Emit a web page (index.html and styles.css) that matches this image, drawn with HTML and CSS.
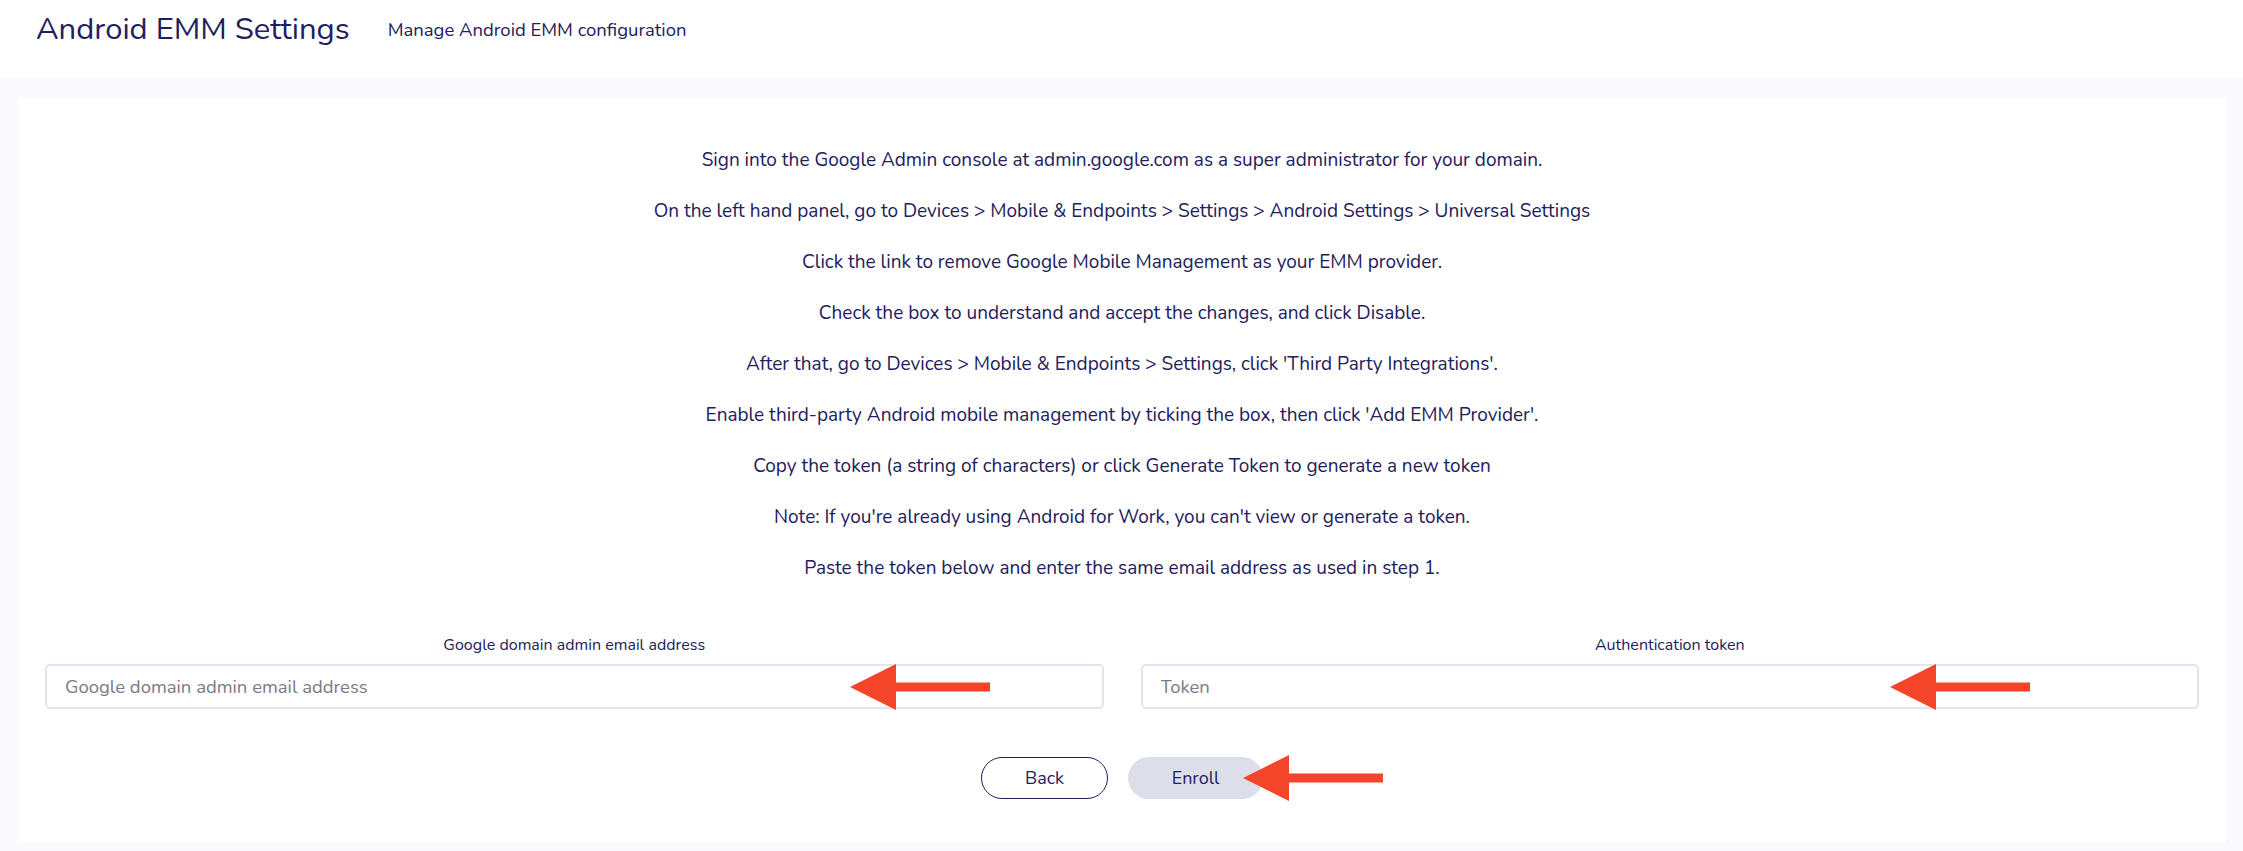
FILE: index.html
```html
<!DOCTYPE html>
<html lang="en">
<head>
  <meta charset="UTF-8">
  <meta name="viewport" content="width=device-width, initial-scale=1.0">
  <title>Android EMM Settings</title>
  <link rel="stylesheet" href="styles.css">
</head>
<body>
  <header class="page-head">
    <h1>Android EMM Settings</h1>
    <span class="page-sub">Manage Android EMM configuration</span>
  </header>

  <main class="page-body">
    <section class="card">
      <div class="steps">
        <p>Sign into the Google Admin console at admin.google.com as a super administrator for your domain.</p>
        <p>On the left hand panel, go to Devices &gt; Mobile &amp; Endpoints &gt; Settings &gt; Android Settings &gt; Universal Settings</p>
        <p>Click the link to remove Google Mobile Management as your EMM provider.</p>
        <p>Check the box to understand and accept the changes, and click Disable.</p>
        <p>After that, go to Devices &gt; Mobile &amp; Endpoints &gt; Settings, click 'Third Party Integrations'.</p>
        <p>Enable third-party Android mobile management by ticking the box, then click 'Add EMM Provider'.</p>
        <p>Copy the token (a string of characters) or click Generate Token to generate a new token</p>
        <p>Note: If you're already using Android for Work, you can't view or generate a token.</p>
        <p>Paste the token below and enter the same email address as used in step 1.</p>
      </div>

      <form class="enroll-form" onsubmit="return false">
        <div class="fields">
          <div class="field">
            <label for="admin-email">Google domain admin email address</label>
            <div class="input-wrap">
              <input type="email" id="admin-email" placeholder="Google domain admin email address">
              <svg class="pointer pointer-email" viewBox="0 0 140 46" width="140" height="46"><polygon points="0,23 46,0 46,18.5 140,18.5 140,27.5 46,27.5 46,46"/></svg>
            </div>
          </div>
          <div class="field">
            <label for="auth-token">Authentication token</label>
            <div class="input-wrap">
              <input type="text" id="auth-token" placeholder="Token">
              <svg class="pointer pointer-token" viewBox="0 0 140 46" width="140" height="46"><polygon points="0,23 46,0 46,18.5 140,18.5 140,27.5 46,27.5 46,46"/></svg>
            </div>
          </div>
        </div>

        <div class="actions">
          <button type="button" class="btn btn-outline">Back</button>
          <span class="btn-wrap">
            <button type="submit" class="btn btn-soft">Enroll</button>
            <svg class="pointer pointer-enroll" viewBox="0 0 140 46" width="140" height="46"><polygon points="0,23 46,0 46,18.5 140,18.5 140,27.5 46,27.5 46,46"/></svg>
          </span>
        </div>
      </form>
    </section>
  </main>
</body>
</html>
```

FILE: styles.css
```css
body { margin:0; font-family:'Nunito', 'Noto Sans', Arial, sans-serif; color:#22205c; background:#fff; }

.page-head { height:77px; display:flex; align-items:center; gap:38px; padding:0 0 20px 36px; box-sizing:border-box; }
.page-head h1 { margin:0; font-size:31px; font-weight:400; color:#22205c; }
.page-sub { font-size:18.5px; color:#22205c; padding-top:3px; }

.page-body { background:#f9f9fe; padding:20px 17px 8px 19px; }
.card { background:#fff; padding:52px 27px 44px 26px; }

.steps { text-align:center; font-size:19px; }
.steps p { margin:0; line-height:22px; }
.steps p + p { margin-top:29px; }

.enroll-form { margin-top:57px; }
.fields { display:grid; grid-template-columns:1fr 1fr; gap:37px; }
.field label { display:block; text-align:center; font-size:16px; margin-bottom:10px; line-height:18px; }
.input-wrap { position:relative; }
.field input { width:100%; box-sizing:border-box; height:45px; border:2px solid #e1e3ef; border-radius:5px; padding:0 18px; font-family:inherit; font-size:18.5px; color:#22205c; outline:none; }
.field input::placeholder { color:#7a7a86; }

.actions { display:flex; justify-content:center; gap:20px; margin-top:48px; }
.btn-wrap { position:relative; }
.btn { height:42px; border-radius:21px; font-family:inherit; font-size:18px; color:#22205c; cursor:pointer; }
.btn-outline { width:127px; background:#fff; border:1px solid #22205c; }
.btn-soft { width:135px; background:#dcdfea; border:none; }

/* red call-out arrows over the form */
.pointer { position:absolute; top:50%; transform:translateY(-50%); fill:#f4442a; pointer-events:none; }
.pointer-email { left:805px; }
.pointer-token { left:749px; }
.pointer-enroll { left:115px; }
```
